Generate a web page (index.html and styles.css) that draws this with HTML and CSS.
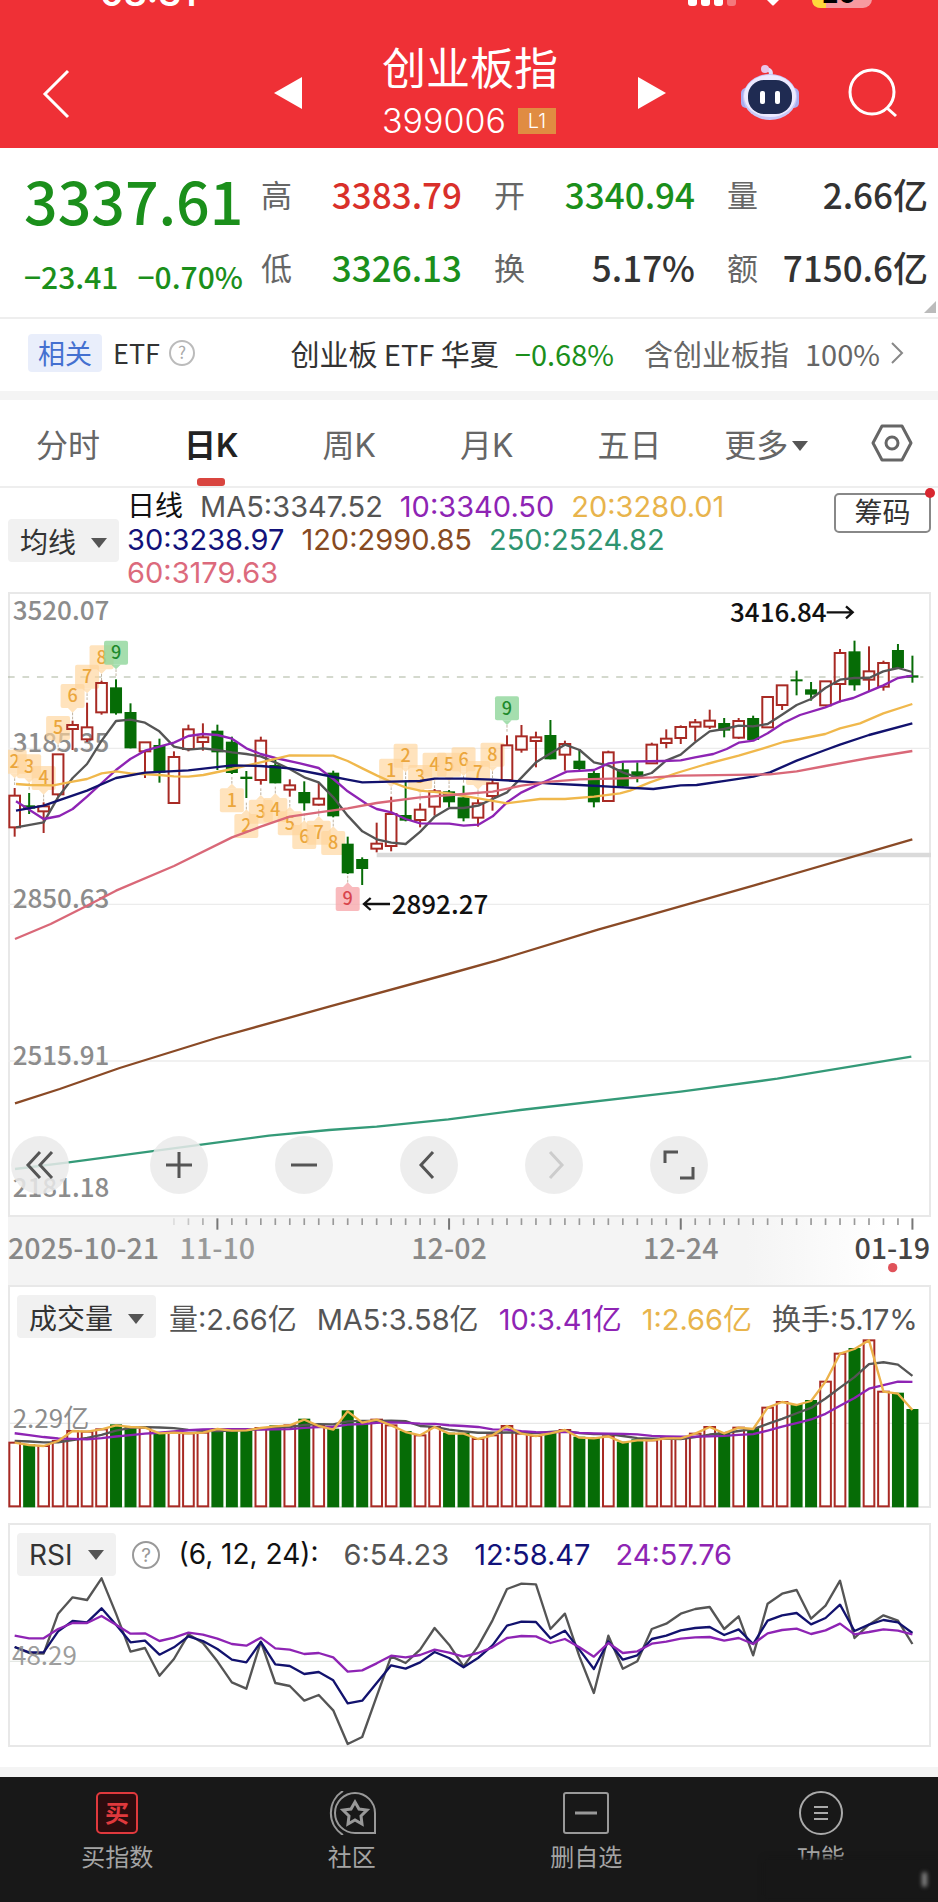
FILE: index.html
```html
<!doctype html>
<html lang="zh-CN">
<head>
	<meta charset="UTF-8">
	<meta name="viewport" content="width=device-width, initial-scale=1">
	<title>创业板指 399006</title>
	<link rel="stylesheet" href="styles.css">
</head>
<body>
	<header class="header">
		<div class="status">
			<span class="time">08:31</span>
			<svg class="signal" viewBox="0 0 190 14" width="190" height="14">
				<g fill="#fff">
					<rect x="0" y="-6" width="9" height="12" rx="3"/>
					<rect x="13" y="-6" width="9" height="12" rx="3"/>
					<rect x="26" y="-6" width="9" height="12" rx="3"/>
					<rect x="39" y="-6" width="9" height="12" rx="3" opacity=".35"/>
					<path d="M79 0h12l-5 5q-1 1-2 0z"/>
				</g>
				<rect x="124" y="-20" width="60" height="28" rx="9" fill="#f79aa0"/>
				<path d="M124 -20h14v28h-5q-9 0-9-9z" fill="#ffd83b"/>
				<text x="134" y="3" font-size="26" font-weight="700">20</text>
			</svg>
		</div>
		<div class="titlebar">
			<button class="icon-btn back" aria-label="返回">
				<svg viewBox="0 0 28 50" width="28" height="50"><path d="M26 2L3 25l23 23" fill="none" stroke="#fff" stroke-width="3"/></svg>
			</button>
			<div class="title-group">
				<button class="icon-btn" aria-label="上一个">
					<svg viewBox="0 0 28 32" width="28" height="32"><path d="M28 0v32L0 16z" fill="#fff"/></svg>
				</button>
				<div class="title">
					<h1>创业板指</h1>
					<p class="code">399006<span class="level">L1</span></p>
				</div>
				<button class="icon-btn" aria-label="下一个">
					<svg viewBox="0 0 28 32" width="28" height="32"><path d="M0 0v32l28-16z" fill="#fff"/></svg>
				</button>
			</div>
			<div class="tools">
				<button class="icon-btn" aria-label="智能助手">
					<svg viewBox="0 0 60 56" width="60" height="56">
						<path d="M30 12Q33 5 26 4" fill="none" stroke="#dfe0fb" stroke-width="4" stroke-linecap="round"/>
						<circle cx="25" cy="4" r="4" fill="#e9c5e8"/>
						<rect x="1" y="23" width="10" height="20" rx="5" fill="#a9adf0"/>
						<rect x="49" y="23" width="10" height="20" rx="5" fill="#a9adf0"/>
						<ellipse cx="30" cy="32" rx="27" ry="23" fill="#c8c9f8"/>
						<ellipse cx="30" cy="31" rx="26" ry="21" fill="#eceaff"/>
						<rect x="8" y="15" width="44" height="34" rx="16" fill="#1f2b52"/>
						<rect x="20" y="26" width="5" height="13" rx="2" fill="#fff"/>
						<rect x="35" y="26" width="5" height="13" rx="2" fill="#fff"/>
					</svg>
				</button>
				<button class="icon-btn" aria-label="搜索">
					<svg viewBox="0 0 50 50" width="50" height="50"><g fill="none" stroke="#fff" stroke-width="3"><circle cx="24" cy="24" r="22"/><path d="M39 40l9 8"/></g></svg>
				</button>
			</div>
		</div>
	</header>

	<section class="quote">
		<div class="quote-main">
			<p class="price">3337.61</p>
			<p class="change"><span>−23.41</span><span>−0.70%</span></p>
		</div>
		<dl class="stats">
			<div><dt>高</dt><dd class="up">3383.79</dd></div>
			<div><dt>开</dt><dd class="down">3340.94</dd></div>
			<div><dt>量</dt><dd>2.66亿</dd></div>
			<div><dt>低</dt><dd class="down">3326.13</dd></div>
			<div><dt>换</dt><dd>5.17%</dd></div>
			<div><dt>额</dt><dd>7150.6亿</dd></div>
		</dl>
		<i class="corner"></i>
	</section>

	<a class="etf" href="#">
		<span class="tag">相关</span>
		<span class="etf-label">ETF</span>
		<svg class="help" viewBox="0 0 28 28" width="28" height="28"><circle cx="14" cy="14" r="12" fill="none" stroke="#bbb" stroke-width="2"/><text x="14" y="20" font-size="17" text-anchor="middle" fill="#aaa">?</text></svg>
		<span class="etf-name">创业板 ETF 华夏</span>
		<span class="etf-rate">−0.68%</span>
		<span class="etf-hold">含创业板指</span>
		<span class="etf-pct">100%</span>
		<svg class="arrow" viewBox="0 0 14 24" width="14" height="24"><path d="M2 2l10 10L2 22" fill="none" stroke="#888" stroke-width="2"/></svg>
	</a>

	<nav class="tabs">
		<div class="tab-list">
			<button>分时</button>
			<button class="active">日K</button>
			<button>周K</button>
			<button>月K</button>
			<button>五日</button>
		</div>
		<button>更多<i class="caret"></i></button>
		<button class="icon-btn" aria-label="设置">
			<svg viewBox="0 0 42 38" width="42" height="38"><g fill="none" stroke="#666" stroke-width="3"><path d="M11 2h20l9 17-9 17H11L2 19z" stroke-linejoin="round"/><circle cx="21" cy="19" r="6"/></g></svg>
		</button>
	</nav>

	<section class="ma">
		<button class="picker">均线<i class="caret"></i></button>
		<div class="ma-list">
			<div><span class="c-black">日线</span><span class="c-gray">MA5:3347.52</span><span class="c-purple">10:3340.50</span><span class="c-gold">20:3280.01</span></div>
			<div><span class="c-navy">30:3238.97</span><span class="c-brown">120:2990.85</span><span class="c-green">250:2524.82</span></div>
			<div><span class="c-pink">60:3179.63</span></div>
		</div>
		<button class="chips">筹码</button>
	</section>

	<section class="chart">
		<svg id="kline" viewBox="24 34 2769 1875"></svg>
		<div class="controls">
			<button aria-label="最早"><svg viewBox="0 0 34 34"><path d="M17 4L5 17l12 13M29 4L17 17l12 13"/></svg></button>
			<button aria-label="放大"><svg viewBox="0 0 34 34"><path d="M4 17h26M17 4v26"/></svg></button>
			<button aria-label="缩小"><svg viewBox="0 0 34 34"><path d="M4 17h26"/></svg></button>
			<button aria-label="向左"><svg viewBox="0 0 34 34"><path d="M21 4L9 17l12 13"/></svg></button>
			<button aria-label="向右" disabled><svg viewBox="0 0 34 34"><path d="M13 4l12 13-12 13"/></svg></button>
			<button aria-label="全屏"><svg viewBox="0 0 34 34"><path d="M3 15V4h13M31 19v11H18"/></svg></button>
		</div>
	</section>
	<svg class="axis" id="axis" viewBox="24 0 2769 204"></svg>

	<section class="panel">
		<div class="panel-head">
			<button class="picker">成交量<i class="caret"></i></button>
			<div class="values">
				<span class="c-gray">量:2.66亿</span><span class="c-gray">MA5:3.58亿</span><span class="c-purple">10:3.41亿</span><span class="c-gold">1:2.66亿</span><span class="c-gray">换手:5.17%</span>
			</div>
		</div>
		<svg id="volume" viewBox="24 204 2769 510"></svg>
	</section>

	<section class="panel">
		<div class="panel-head rsi">
			<button class="picker">RSI<i class="caret"></i></button>
			<svg viewBox="0 0 30 30" width="30" height="30"><circle cx="15" cy="15" r="13" fill="none" stroke="#999" stroke-width="2"/><text x="15" y="22" font-size="19" text-anchor="middle" fill="#999">?</text></svg>
			<div class="values">
				<span class="c-black">(6, 12, 24):</span><span class="c-gray">6:54.23</span><span class="c-navy">12:58.47</span><span class="c-purple">24:57.76</span>
			</div>
		</div>
		<svg id="rsi" viewBox="24 199 2769 513"></svg>
	</section>

	<nav class="bottom">
		<a href="#">
			<svg viewBox="0 0 50 44"><rect x="5" y="2" width="40" height="40" rx="4" fill="#2c0c0e" stroke="#e0393d" stroke-width="2"/><text x="25" y="31" font-size="24" font-weight="700" text-anchor="middle" fill="#e0393d">买</text></svg>
			<span>买指数</span>
		</a>
		<a href="#">
			<svg viewBox="0 0 50 44"><g fill="none" stroke="#999" stroke-width="2"><path d="M28 2a20 20 0 1 0 0 40h20V22A20 20 0 0 0 28 2z"/><path d="M16 0a26 26 0 0 0 0 44"/><path d="M28 11l4 7 8 1-6 6 1 8-7-4-7 4 1-8-6-6 8-1z" stroke-width="3"/></g></svg>
			<span>社区</span>
		</a>
		<a href="#">
			<svg viewBox="0 0 50 44"><g fill="none" stroke="#999" stroke-width="2"><rect x="3" y="2" width="44" height="40" rx="2"/><path d="M14 22h22" stroke-width="3"/></g></svg>
			<span>删自选</span>
		</a>
		<a href="#">
			<svg viewBox="0 0 50 44"><g fill="none" stroke="#aaa" stroke-width="2"><circle cx="25" cy="22" r="21"/><path d="M18 16h14M18 22h14M18 28h14"/></g></svg>
			<span>功能</span>
		</a>
		<i class="smudge"></i>
	</nav>
	<script src="script.js"></script>
</body>
</html>
```
FILE: styles.css
```css
*{
	box-sizing:border-box;
	margin:0;
	padding:0;
}
body{
	background:#fff;
	color:#333;
	font-family:Inter,'Noto Sans CJK SC',sans-serif;
	font-size:27px;
}
button{
	border:0;
	background:none;
	color:inherit;
	font:inherit;
	white-space:nowrap;
}
a{
	color:inherit;
	text-decoration:none;
}
svg{
	display:block;
}
.icon-btn{
	display:block;
}
.caret{
	display:inline-block;
	margin:0 0 4px 15px;
	border:8px solid transparent;
	border-top:10px solid #555;
	border-bottom:0;
	vertical-align:middle;
}

/* 顶部 */
.header{
	height:148px;
	background:#ef3036;
	color:#fff;
	overflow:hidden;
}
.status{
	display:flex;
	justify-content:space-between;
	height:14px;
	padding:0 60px 0 100px;
}
.time{
	margin-top:-27px;
	font-size:36px;
	font-weight:600;
	line-height:40px;
}
.titlebar{
	display:grid;
	grid-template-columns:1fr 392px 1fr;
	align-items:center;
	height:134px;
	padding:0 40px 0 42px;
}
.back{
	justify-self:start;
	margin-top:26px;
}
.title-group{
	display:flex;
	justify-content:space-between;
	align-items:center;
}
.title-group .icon-btn{
	margin-top:24px;
}
.title{
	text-align:center;
	padding-top:20px;
}
.title h1{
	font-size:44px;
	font-weight:400;
	line-height:60px;
}
.code{
	display:flex;
	align-items:center;
	gap:12px;
	font-size:34px;
	font-weight:300;
	line-height:44px;
}
.level{
	width:38px;
	background:#e08c42;
	font-size:20px;
	line-height:26px;
}
.tools{
	display:flex;
	justify-content:flex-end;
	align-items:center;
	gap:48px;
	margin-top:24px;
}

/* 行情 */
.quote{
	position:relative;
	display:flex;
	height:171px;
	padding:0 10px 0 24px;
	border-bottom:2px solid #eee;
	font-family:'Noto Sans CJK SC',sans-serif;
}
.quote-main{
	width:219px;
	margin-right:18px;
	color:#1b8f1b;
	font-weight:500;
	white-space:nowrap;
}
.price{
	padding-top:14px;
	font-size:59px;
	line-height:76px;
}
.change{
	display:flex;
	justify-content:space-between;
	padding-top:18px;
	font-size:30px;
	line-height:40px;
}
.stats{
	flex:1;
	display:grid;
	grid-template-columns:repeat(3,1fr);
	grid-auto-rows:73px;
	column-gap:32px;
	padding-top:9px;
}
.stats div{
	display:flex;
	justify-content:space-between;
	align-items:center;
	white-space:nowrap;
}
.stats dt{
	color:#666;
	font-size:31px;
}
.stats dd{
	font-size:35px;
	font-weight:500;
}
.stats .up{
	color:#d9302a;
}
.stats .down{
	color:#1b8f1b;
}
.corner{
	position:absolute;
	right:2px;
	bottom:4px;
	border:6px solid #bbb;
	border-left-color:transparent;
	border-top-color:transparent;
}

/* ETF */
.etf{
	display:flex;
	align-items:center;
	height:81px;
	padding:0 34px 5px 28px;
	border-bottom:9px solid #f4f4f4;
	font-family:'Noto Sans CJK SC',sans-serif;
	white-space:nowrap;
}
.tag{
	width:74px;
	background:#e9eefb;
	border-radius:4px;
	color:#4470d0;
	line-height:38px;
	text-align:center;
}
.etf-label{
	margin:0 8px 0 11px;
}
.etf-name{
	margin-left:auto;
	font-size:29px;
}
.etf-rate{
	margin:0 30px 0 16px;
	color:#1b8f1b;
	font-size:29px;
}
.etf-hold{
	color:#666;
	font-size:29px;
}
.etf-pct{
	margin:0 10px 0 16px;
	color:#666;
	font-size:29px;
}

/* 周期 */
.tabs{
	display:flex;
	justify-content:space-between;
	align-items:center;
	height:88px;
	padding:0 25px 0 36px;
	border-bottom:2px solid #eee;
	color:#666;
	font-size:32px;
}
.tab-list{
	display:flex;
	gap:84px;
}
.tabs .active{
	position:relative;
	color:#222;
	font-weight:600;
}
.tabs .active::after{
	content:'';
	position:absolute;
	left:50%;
	bottom:-20px;
	width:28px;
	height:8px;
	margin-left:-14px;
	border-radius:3px;
	background:#d9453f;
}
.tabs .caret{
	margin-left:4px;
}

/* 均线 */
.ma{
	display:flex;
	height:104px;
	padding:2px 7px 0 8px;
	font-size:29px;
}
.picker{
	height:43px;
	padding:0 12px;
	background:#f1f1f1;
	border-radius:4px;
	color:#333;
	font-size:28px;
}
.ma .picker{
	margin-top:29px;
}
.ma-list{
	flex:1;
	padding-left:8px;
	line-height:33px;
	white-space:nowrap;
}
.ma-list div{
	display:flex;
	gap:17px;
}
.ma-list .c-black{
	font-size:28px;
}
.chips{
	position:relative;
	width:97px;
	height:40px;
	margin-top:3px;
	border:2px solid #888;
	border-radius:5px;
	font-size:28px;
	line-height:34px;
}
.chips::after{
	content:'';
	position:absolute;
	right:-6px;
	top:-7px;
	width:10px;
	height:10px;
	border-radius:50%;
	background:#d8262f;
}
.c-black{ color:#111; }
.c-gray{ color:#555; }
.c-purple{ color:#8e24b4; }
.c-gold{ color:#e8b44c; }
.c-navy{ color:#12127a; }
.c-brown{ color:#874a22; }
.c-green{ color:#2f9470; }
.c-pink{ color:#dc6a7c; }

/* 图表 */
.chart,.panel,.axis{
	margin:0 7px 0 8px;
}
.chart,.panel{
	position:relative;
	box-shadow:inset 0 0 0 2px #e8e8e8;
}
.chart > svg,.panel > svg{
	width:100%;
	height:auto;
	font-family:'Noto Sans CJK SC',sans-serif;
}
.axis{
	width:calc(100% - 15px);
	background:linear-gradient(to right,#f4f4f4 0,#f4f4f4 80%,#fff 95%);
	font-family:'Noto Sans CJK SC',sans-serif;
}
.controls{
	position:absolute;
	left:3px;
	bottom:23px;
	display:flex;
	gap:67px;
}
.controls button{
	display:flex;
	align-items:center;
	justify-content:center;
	width:58px;
	height:58px;
	border-radius:50%;
	background:rgba(234,234,234,.85);
}
.controls button:first-child{
	margin-right:14px;
}
.controls svg{
	width:34px;
	height:34px;
	fill:none;
	stroke:#555;
	stroke-width:3;
}
.controls button:disabled svg{
	stroke:#ccc;
}
.panel + .panel{
	margin-top:15px;
}
.panel-head{
	display:flex;
	align-items:center;
	height:53px;
	padding:10px 9px 0;
}
.panel-head .picker{
	margin-right:13px;
}
.values{
	display:flex;
	gap:20px;
	font-size:29px;
	white-space:nowrap;
}
.rsi .picker{
	margin-right:15px;
}
.rsi .values{
	gap:25px;
	margin-left:18px;
}
.values .c-black{
	font-size:28px;
}

/* 底部 */
.bottom{
	position:relative;
	display:grid;
	grid-template-columns:repeat(4,1fr);
	height:135px;
	margin-top:20px;
	border-top:10px solid #f4f4f4;
	background:#181818;
	color:#a4a4a4;
	font-size:24px;
	overflow:hidden;
}
.bottom a{
	display:flex;
	flex-direction:column;
	align-items:center;
	gap:3px;
	padding-top:14px;
}
.bottom svg{
	width:50px;
	height:44px;
}
.smudge{
	position:absolute;
	right:0;
	bottom:4px;
	width:172px;
	height:38px;
	background:#171717;
	box-shadow:0 0 5px 2px #171717;
}
.smudge::after{
	content:'';
	position:absolute;
	right:11px;
	top:12px;
	width:5px;
	height:15px;
	border-radius:3px;
	background:#888;
	filter:blur(2px);
}
```
FILE: script.js
```js
// 所有坐标均为 3 倍像素
var STEP=43.44;
var RED='#a82a24';
var GREEN='#066c06';
function px(i){
	return 44+STEP*i;
}
function rect(x,y,w,h,attr){
	return '<rect x="'+x+'" y="'+y+'" width="'+w+'" height="'+h+'" '+(attr||'')+'/>';
}
function line(x1,y1,x2,y2,color,w,attr){
	return '<line x1="'+x1+'" y1="'+y1+'" x2="'+x2+'" y2="'+y2+'" stroke="'+color+'" stroke-width="'+w+'" '+(attr||'')+'/>';
}
function poly(points,color,w){
	return '<polyline points="'+points+'" fill="none" stroke="'+color+'" stroke-width="'+(w||7)+'" stroke-linejoin="round"/>';
}
function text(x,y,s,size,color,attr){
	return '<text x="'+x+'" y="'+y+'" font-size="'+size+'" fill="'+color+'" '+(attr||'')+'>'+s+'</text>';
}
function series(arr){
	return arr.map(function(v,i){ return px(i)+','+v; }).join(' ');
}

// 涨跌, 实体上, 实体下, 最高, 最低
var candles=[
	['R',645,740,622,768],['G',674,684,637,700],['R',677,692,665,757],['R',521,641,521,648],['R',433,445,420,508],
	['R',440,476,366,484],['R',307,395,300,402],['G',320,398,296,402],['G',394,503,368,503],['R',485,512,485,592],
	['G',493,576,474,606],['R',529,667,512,667],['R',446,505,432,512],['R',470,484,428,510],['G',450,515,432,568],
	['G',483,577,468,580],['G',588,595,571,652],['R',480,598,468,612],['G',553,608,536,608],['R',614,627,596,648],
	['G',634,668,602,690],['R',654,672,605,675],['G',576,707,570,710],['G',789,878,768,880],['G',835,865,830,913],
	['R',789,804,726,815],['R',700,796,648,812],['G',703,720,600,722],['R',687,718,668,740],['R',632,678,625,705],
	['G',632,665,628,680],['G',650,713,615,722],['R',668,711,655,738],['R',608,646,598,690],['R',494,598,464,598],
	['R',467,507,433,516],['R',470,481,453,560],['G',463,536,418,536],['R',490,522,480,570],['G',540,565,505,570],
	['G',577,665,568,680],['R',515,661,510,664],['G',566,618,545,620],['G',572,588,545,605],['R',492,548,486,548],
	['R',474,487,446,503],['R',439,472,434,490],['R',425,438,415,482],['R',420,438,387,445],['G',427,450,412,470],
	['R',421,471,412,475],['G',412,478,405,480],['R',349,440,349,440],['R',314,373,314,388],['G',296,302,270,344],
	['G',326,342,304,360],['R',302,374,302,374],['R',217,310,205,365],['G',212,314,180,330],['R',272,297,197,332],
	['R',247,318,240,330],['G',208,262,190,262],['G',284,291,225,306]
];
var ma=[
	['#555','48,740 131,725 174,650 218,592 261,550 305,480 348,421 391,417 435,426 478,452 522,498 565,507 609,503 652,508 696,515 739,520 782,527 826,545 869,565 913,590 956,605 1000,650 1043,705 1087,752 1130,776 1174,786 1217,790 1261,753 1304,708 1348,682 1391,682 1435,675 1478,655 1521,635 1565,590 1608,545 1652,518 1695,492 1739,508 1782,545 1826,555 1868,575 1911,590 1955,577 1998,540 2042,522 2085,485 2129,452 2172,445 2216,435 2259,437 2303,430 2346,402 2390,373 2433,355 2476,322 2520,297 2563,292 2607,292 2650,272 2694,262 2737,274'],
	['#8e24b4','48,662 131,715 178,706 218,685 261,648 348,568 391,535 435,510 478,498 522,486 565,466 609,460 652,463 696,474 739,503 782,520 826,532 900,548 956,562 1000,595 1043,632 1100,670 1130,685 1174,695 1217,715 1261,728 1348,729 1391,735 1435,732 1478,707 1521,665 1565,635 1608,615 1652,595 1700,573 1782,568 1826,548 1870,543 1990,541 2042,539 2085,530 2140,520 2180,505 2216,486 2260,480 2303,458 2350,427 2400,403 2476,380 2520,362 2560,352 2607,332 2650,314 2694,292 2737,285'],
	['#f0b84c','48,610 90,613 160,614 218,603 261,595 305,578 348,572 391,578 478,583 522,587 565,588 610,583 696,565 782,545 869,524 1000,525 1043,541 1087,563 1130,584 1174,604 1217,620 1261,630 1348,638 1391,646 1435,653 1521,668 1565,662 1620,655 1695,655 1782,648 1860,638 1890,630 1950,605 2030,577 2120,550 2216,525 2290,503 2350,484 2400,475 2476,460 2520,443 2580,428 2650,398 2737,370'],
	['#12126e','48,690 131,675 174,660 261,630 348,592 435,576 565,569 696,554 782,556 869,563 956,580 1043,597 1087,605 1174,603 1260,601 1304,594 1391,594 1478,597 1565,602 1652,609 1739,613 1870,620 1960,625 2042,614 2090,613 2180,600 2260,588 2310,575 2390,540 2476,508 2520,492 2607,463 2737,428'],
	['#d96878','45,1075 152,1030 261,975 348,930 522,856 696,770 782,738 869,708 956,695 1043,683 1130,667 1260,650 1391,640 1478,633 1565,615 1652,603 1739,596 1870,593 1960,590 2042,585 2260,582 2310,581 2390,572 2476,556 2607,532 2737,511'],
	['#8a4a26','45,1568 179,1525 359,1462 649,1372 987,1278 1345,1180 1489,1140 1794,1047 1890,1020 2260,915 2737,776'],
	['#349a78','45,1765 206,1745 649,1686 807,1665 987,1648 1130,1638 1345,1616 1561,1588 2042,1533 2332,1494 2734,1428']
];
// 序号, 数字, 中心 y, 箭头方向
var marks=[
	[0,2,543,1],[1,3,557,1],[2,4,592,1],[3,5,442,1],[4,6,346,1],[5,7,288,1],[6,8,230,1],[7,9,216,1],
	[15,1,659,-1],[16,2,736,-1],[17,3,693,-1],[18,4,688,-1],[19,5,728,-1],[20,6,769,-1],[21,7,756,-1],[22,8,787,-1],[23,9,955,-1],
	[26,1,570,1],[27,2,525,1],[28,3,589,1],[29,4,552,1],[30,5,552,1],[31,6,536,1],[32,7,577,1],[33,8,522,1],[34,9,383,1]
];

function drawKline(){
	var s='';
	[503,971,1441].forEach(function(y){
		s+=line(24,y,2793,y,'#ececec',4);
	});
	s+=line(1130,823,2793,823,'#dadada',14);
	[[117,'3520.07'],[513,'3185.35'],[983,'2850.63'],[1453,'2515.91'],[1850,'2181.18']].forEach(function(t){
		s+=text(38,t[0],t[1],78,'#8c8c8c','font-weight="500"');
	});
	s+=line(24,289,2770,289,'#a9b39c',3,'stroke-dasharray="20 23.44"');
	marks.forEach(function(m){
		var x=px(m[0]),y=m[2],d=m[3];
		var nine=m[1]==9;
		var bg=nine?(d>0?'#8fd69a':'#f7a9ad'):'#ffd49a';
		var fg=nine?(d>0?'#1f8a2c':'#d8444c'):'#eba63c';
		s+='<g fill="'+bg+'" fill-opacity="'+(nine?.8:.65)+'">'+rect(x-36,y-36,72,72,'rx="6"');
		s+='<path d="M'+(x-14)+' '+(y+36*d)+'h28l-14 '+(14*d)+'z"/></g>';
		s+=line(x,y+50*d,x,y+74*d,'#a08c70',2,'stroke-dasharray="8 4"');
		s+=text(x,y+19,m[1],54,fg,'text-anchor="middle" font-weight="500"');
	});
	candles.forEach(function(c,i){
		var x=px(i);
		var color=c[0]=='R'?RED:GREEN;
		if(c[0]=='G'){
			s+=line(x,c[3],x,c[4],color,6)+rect(x-18,c[1],36,c[2]-c[1],'fill="'+color+'"');
		}else{
			s+=line(x,c[3],x,c[1],color,6)+line(x,c[2],x,c[4],color,6);
			s+=rect(x-16,c[1],32,c[2]-c[1],'fill="none" stroke="'+color+'" stroke-width="6"');
		}
	});
	ma.forEach(function(m){
		s+=poly(m[1],m[0]);
	});
	s+=text(2190,125,'3416.84',78,'#111','font-weight="500"');
	s+='<path d="M2480 95h78m-20 -18l20 18l-20 18M1170 970h-78m20 -18l-20 18l20 18" fill="none" stroke="#111" stroke-width="7"/>';
	s+=text(1175,1000,'2892.27',78,'#111','font-weight="500"');
	document.getElementById('kline').innerHTML=s;
}

function drawAxis(){
	var s='';
	for(var i=11;i<=62;i++){
		var major=(i-14)%16==0;
		s+=line(px(i),4,px(i),major?38:24,major?'#777':'#999',major?6:5,i<14?'opacity="'+(i-10)*.25+'"':'');
	}
	s+=text(24,127,'2025-10-21',86,'#888','font-weight="500"');
	s+=text(px(14),127,'11-10',86,'#999','text-anchor="middle" font-weight="500"');
	s+=text(px(30),127,'12-02',86,'#888','text-anchor="middle" font-weight="500"');
	s+=text(px(46),127,'12-24',86,'#888','text-anchor="middle" font-weight="500"');
	s+=text(2790,127,'01-19',86,'#444','text-anchor="end" font-weight="500"');
	s+='<circle cx="2678" cy="152" r="14" fill="#e0525a"/>';
	document.getElementById('axis').innerHTML=s;
}

var volume=[515,522,525,510,480,482,475,463,468,470,487,485,487,485,474,479,478,471,466,463,446,465,476,421,455,446,463,483,493,468,488,488,504,493,465,488,495,487,477,500,502,496,515,508,508,502,502,488,468,487,470,474,410,393,402,390,332,248,234,208,362,368,417];
var before=[467,467,467,467,467,512,512,512,512];
function average(n){
	var all=before.concat(volume);
	return volume.map(function(v,i){
		var end=i+before.length+1;
		return all.slice(end-n,end).reduce(function(a,b){ return a+b; })/n;
	});
}
function drawVolume(){
	var s=line(24,460,2793,460,'#e8e8e8',4);
	s+=text(38,473,'2.29亿',78,'#8c8c8c');
	volume.forEach(function(v,i){
		var x=px(i);
		if(candles[i][0]=='G'){
			s+=rect(x-18,v,36,712-v,'fill="'+GREEN+'"');
		}else{
			s+=rect(x-16,v+3,32,706-v,'fill="#fff" stroke="'+RED+'" stroke-width="6"');
		}
	});
	s+=poly(series(average(5)),'#555')+poly(series(average(10)),'#8e24b4')+poly(series(volume.map(function(v){ return v+3; })),'#ecb24a');
	document.getElementById('volume').innerHTML=s;
}

var rsi6=[412,430,432,312,263,271,206,312,426,415,498,448,374,400,455,518,537,396,520,529,573,556,602,703,682,560,440,460,420,355,405,470,410,332,238,222,224,358,312,440,550,378,477,455,358,342,312,298,292,358,320,437,282,252,241,327,288,213,385,345,317,333,403];
var rsi12=[412,428,428,365,334,338,296,345,398,393,435,413,380,394,418,450,458,397,464,469,493,487,512,581,573,520,467,477,458,427,445,473,445,407,348,336,337,386,363,420,478,395,450,437,388,378,362,355,352,376,359,403,333,317,310,344,325,285,364,345,331,338,370];
var rsi24=[378,386,386,358,340,340,319,345,372,371,394,384,369,375,387,403,408,384,416,420,433,430,443,486,482,461,438,443,436,420,429,441,430,413,385,379,380,400,388,413,441,400,430,425,402,396,387,383,382,393,385,403,371,361,357,373,362,342,374,367,359,363,374];
function drawRsi(){
	var s=line(24,455,2793,455,'#e4e8e4',4);
	s+=poly(series(rsi6),'#555')+poly(series(rsi12),'#12126e')+poly(series(rsi24),'#8e24b4');
	s+=text(36,466,'48.29',78,'#8c8c8c','fill-opacity=".85"');
	document.getElementById('rsi').innerHTML=s;
}

drawKline();
drawAxis();
drawVolume();
drawRsi();
```
